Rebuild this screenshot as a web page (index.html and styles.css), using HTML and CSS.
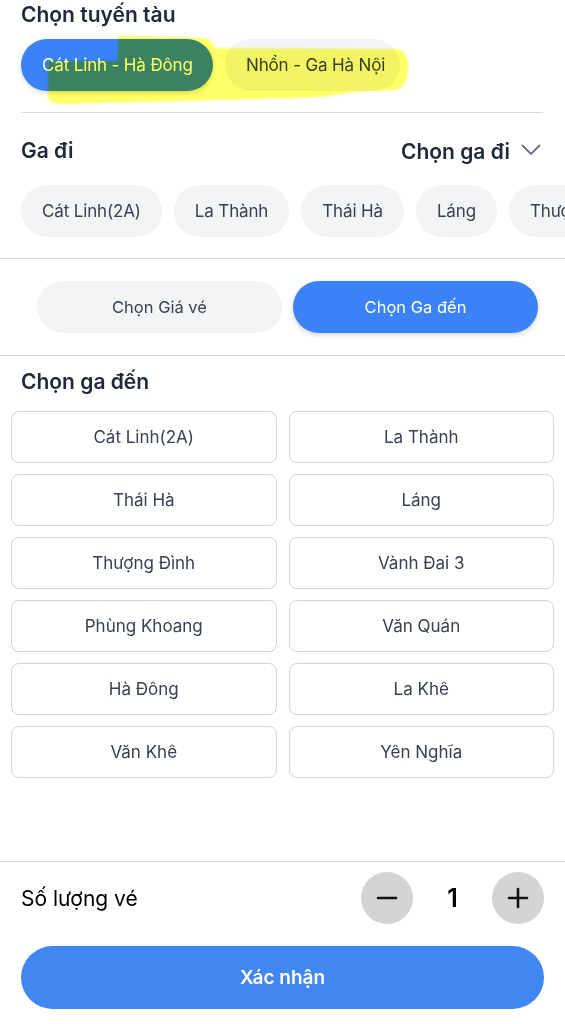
FILE: index.html
```html
<!DOCTYPE html>
<html lang="vi">
<head>
<meta charset="utf-8">
<title>Chọn tuyến tàu</title>
<link rel="stylesheet" href="styles.css">
</head>
<body>
<div class="page">
  <section class="route">
    <h2 class="title">Chọn tuyến tàu</h2>
    <div class="route-chips">
      <button class="chip chip-active">Cát Linh - Hà Đông</button>
      <button class="chip">Nhổn - Ga Hà Nội</button>
    </div>
    <div class="divider inset"></div>
    <svg class="highlight" width="565" height="120" viewBox="0 0 565 120" aria-hidden="true">
      <defs><filter id="soft"><feGaussianBlur stdDeviation="0.8"/></filter></defs>
      <path filter="url(#soft)" d="M118,36 L205,38 Q214,41 215,48 L398,49 Q408,52 408,68 Q408,87 396,90 L352,92 Q338,96 300,98 L62,104 Q48,104 48,95 L48,61 L118,61 Z"/>
    </svg>
  </section>

  <section class="depart">
    <div class="depart-head">
      <h2 class="title">Ga đi</h2>
      <div class="picker">
        <span>Chọn ga đi</span>
        <svg width="20" height="12" viewBox="0 0 20 12"><polyline points="1.5,1.5 10,10 18.5,1.5" fill="none" stroke="#6b7280" stroke-width="1.8" stroke-linecap="round" stroke-linejoin="round"/></svg>
      </div>
    </div>
    <div class="station-chips">
      <button class="chip">Cát Linh(2A)</button>
      <button class="chip">La Thành</button>
      <button class="chip">Thái Hà</button>
      <button class="chip">Láng</button>
      <button class="chip">Thượng Đình</button>
      <button class="chip">Vành Đai 3</button>
    </div>
  </section>
  <div class="divider"></div>

  <section class="tabs">
    <button class="tab">Chọn Giá vé</button>
    <button class="tab tab-active">Chọn Ga đến</button>
  </section>
  <div class="divider"></div>

  <section class="arrive">
    <h2 class="title">Chọn ga đến</h2>
    <div class="grid">
      <button class="cell">Cát Linh(2A)</button>
      <button class="cell">La Thành</button>
      <button class="cell">Thái Hà</button>
      <button class="cell">Láng</button>
      <button class="cell">Thượng Đình</button>
      <button class="cell">Vành Đai 3</button>
      <button class="cell">Phùng Khoang</button>
      <button class="cell">Văn Quán</button>
      <button class="cell">Hà Đông</button>
      <button class="cell">La Khê</button>
      <button class="cell">Văn Khê</button>
      <button class="cell">Yên Nghĩa</button>
    </div>
  </section>

  <footer class="footer">
    <div class="qty">
      <span class="qty-label">Số lượng vé</span>
      <div class="stepper">
        <button class="round" aria-label="Giảm"><svg width="22" height="22" viewBox="0 0 22 22"><line x1="2" y1="11" x2="20" y2="11" stroke="#111" stroke-width="2.6" stroke-linecap="round"/></svg></button>
        <span class="count">1</span>
        <button class="round" aria-label="Tăng"><svg width="22" height="22" viewBox="0 0 22 22"><line x1="2" y1="11" x2="20" y2="11" stroke="#111" stroke-width="2.6" stroke-linecap="round"/><line x1="11" y1="2" x2="11" y2="20" stroke="#111" stroke-width="2.6" stroke-linecap="round"/></svg></button>
      </div>
    </div>
    <button class="confirm">Xác nhận</button>
  </footer>
</div>
</body>
</html>
```

FILE: styles.css
```css
* { box-sizing: border-box; }
html, body { margin: 0; padding: 0; background: #fff; }
body {
  font-family: Inter, "Noto Sans", "Liberation Sans", sans-serif;
  color: #1f2937;
  width: 565px;
  overflow: hidden;
}
button { font-family: inherit; border: 0; margin: 0; cursor: pointer; }

.page {
  min-height: 1024px;
  display: flex;
  flex-direction: column;
}

.title {
  margin: 0;
  font-size: 21px;
  line-height: 30px;
  font-weight: 600;
  color: #1f2937;
}

.divider { height: 1px; background: #dcdcdc; }

/* route */
.route { position: relative; padding: 0 0 0 21px; }
.route .divider.inset { margin: 21px 22px 0 0; }
.route-chips { display: flex; gap: 12px; margin-top: 9px; }
.chip {
  height: 52px;
  padding: 0 21px;
  border-radius: 26px;
  background: #f3f4f6;
  color: #374151;
  font-size: 17px;
  letter-spacing: -0.15px;
  white-space: nowrap;
  flex: none;
}
.chip-active {
  background: #3b82f6;
  color: #fff;
  box-shadow: 0 2px 5px rgba(0,0,0,0.15);
}
.route-chips .chip:first-child { width: 192px; }
.route-chips .chip:last-child { width: 175px; }
.highlight {
  position: absolute;
  left: 0;
  top: 0;
  pointer-events: none;
  mix-blend-mode: multiply;
  fill: #ffff00;
  opacity: 0.6;
}

/* depart */
.depart { padding: 23px 0 21px 21px; }
.depart-head {
  display: flex;
  align-items: center;
  justify-content: space-between;
  padding-right: 24px;
}
.picker {
  display: flex;
  align-items: center;
  gap: 11px;
  font-size: 21px;
  font-weight: 600;
  color: #1f2937;
}
.picker svg { margin-top: -2px; }
.station-chips {
  display: flex;
  gap: 12px;
  margin-top: 19px;
  overflow: hidden;
}

/* tabs */
.tabs {
  display: flex;
  gap: 11px;
  padding: 22px 27px 22px 37px;
}
.tab {
  flex: 1;
  height: 52px;
  border-radius: 26px;
  background: #f3f4f6;
  color: #374151;
  font-size: 16.5px;
}
.tab-active {
  background: #3b82f6;
  color: #fff;
  box-shadow: 0 2px 5px rgba(0,0,0,0.18);
}

/* arrive */
.arrive { padding: 11px 11px 0 11px; }
.arrive .title { padding-left: 10px; }
.grid {
  margin-top: 14px;
  display: grid;
  grid-template-columns: 1fr 1fr;
  column-gap: 12px;
  row-gap: 11px;
}
.cell {
  height: 52px;
  background: #fff;
  border: 1px solid #d4d4d8;
  border-radius: 8px;
  color: #374151;
  font-size: 17px;
}

/* footer */
.footer {
  margin-top: auto;
  border-top: 1px solid #dcdcdc;
  padding: 10px 21px 15px 21px;
}
.qty {
  display: flex;
  align-items: center;
  justify-content: space-between;
}
.qty-label { font-size: 21px; color: #000; }
.stepper { display: flex; align-items: center; gap: 32px; }
.round {
  width: 52px;
  height: 52px;
  border-radius: 50%;
  background: #d4d4d4;
  display: flex;
  align-items: center;
  justify-content: center;
  padding: 0;
}
.count { font-size: 25px; font-weight: 600; color: #000; width: 15px; text-align: center; }
.confirm {
  display: block;
  width: 100%;
  height: 63px;
  margin-top: 22px;
  border-radius: 32px;
  background: #4286f2;
  color: #fff;
  font-size: 19px;
  font-weight: 600;
}
```
